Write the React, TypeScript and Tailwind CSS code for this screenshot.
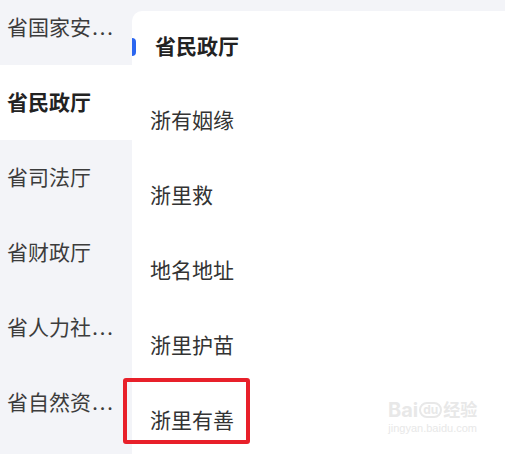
import React from "react";

// short = label shown in the sidebar, more = whether it's clipped with dots
const departments = [
  { short: "省国家安", more: true },
  { short: "省民政厅", more: false },
  { short: "省司法厅", more: false },
  { short: "省财政厅", more: false },
  { short: "省人力社", more: true },
  { short: "省自然资", more: true },
];

const services = ["浙有姻缘", "浙里救", "地名地址", "浙里护苗", "浙里有善"];

const font = {
  fontFamily: '"Inter", "Noto Sans CJK SC", sans-serif',
};

export default function App() {
  const active = 1;

  return (
    <div
      className="relative flex h-[454px] w-[505px] overflow-hidden bg-[#f3f4f8]"
      style={font}
    >
      {/* left sidebar */}
      <div className="-mt-[10px] flex w-[132px] shrink-0 flex-col">
        {departments.map((d, i) => (
          <div
            key={d.short}
            className={
              i === active
                ? "flex h-[75px] items-center whitespace-nowrap bg-white pl-[7px] text-[21px] font-bold text-[#222]"
                : "flex h-[75px] items-center whitespace-nowrap pl-[7px] text-[21px] text-[#3c3c3c]"
            }
          >
            {d.short}
            {d.more && <span className="ml-[1px] tracking-[1.5px]">...</span>}
          </div>
        ))}
      </div>

      {/* right panel */}
      <div className="relative mt-[11px] flex flex-1 flex-col rounded-tl-[10px] bg-white">
        <div className="relative flex h-[72px] shrink-0 items-center pl-[23px] text-[21px] font-bold text-[#222]">
          <span className="absolute left-0 top-[27px] h-[18px] w-[4px] rounded-r-full bg-[#2b66f0]" />
          {departments[active].short}
        </div>
        {services.map((s) => (
          <div
            key={s}
            className="flex h-[75px] shrink-0 items-center pl-[18px] text-[21px] text-[#333]"
          >
            {s}
          </div>
        ))}
      </div>

      {/* highlight box */}
      <div className="absolute left-[123px] top-[378px] h-[66px] w-[127px] rounded-[3px] border-4 border-[#e8202a]" />

      {/* watermark */}
      <div className="pointer-events-none absolute left-[388px] top-[400px] flex flex-col items-center text-[#e8e8e8]">
        <div className="flex items-center text-[20px] font-bold leading-none">
          <span>Bai</span>
          <span className="mx-[1px] rounded-full border-2 border-[#e8e8e8] px-[2px] text-[12px]">
            du
          </span>
          <span className="text-[17px]">经验</span>
        </div>
        <div
          className="mt-[3px] text-[11px] leading-none"
          style={{ fontFamily: '"Liberation Sans", sans-serif' }}
        >
          jingyan.baidu.com
        </div>
      </div>
    </div>
  );
}
